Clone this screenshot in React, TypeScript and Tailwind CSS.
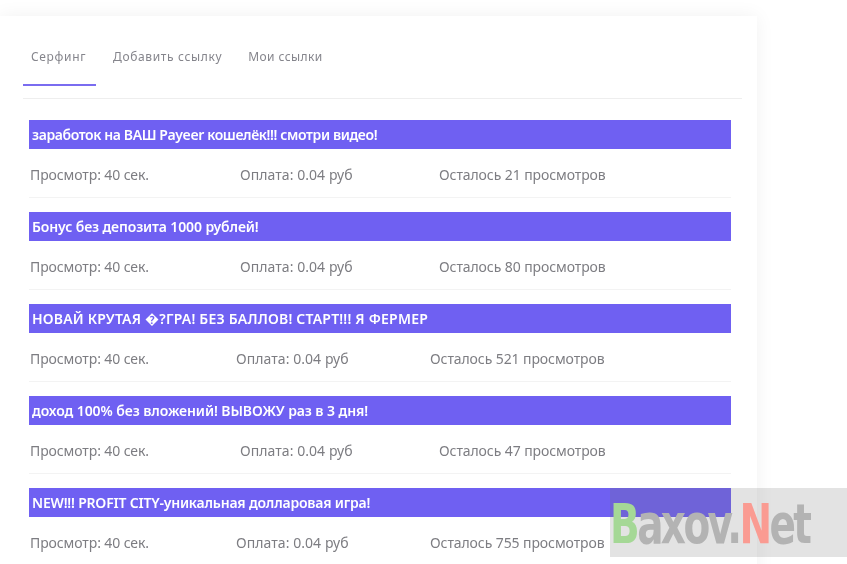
const rows = [
  { title: "заработок на ВАШ Payeer кошелёк!!! смотри видео!", track: "tracking-[-0.39px]", wide: true, left: "Осталось 21 просмотров" },
  { title: "Бонус без депозита 1000 рублей!", track: "tracking-[-0.13px]", wide: true, left: "Осталось 80 просмотров" },
  { title: "НОВАЙ КРУТАЯ �?ГРА! БЕЗ БАЛЛОВ! СТАРТ!!! Я ФЕРМЕР", track: "tracking-[0.2px]", wide: false, left: "Осталось 521 просмотров" },
  { title: "доход 100% без вложений! ВЫВОЖУ раз в 3 дня!", track: "tracking-[-0.09px]", wide: true, left: "Осталось 47 просмотров" },
  { title: "NEW!!! PROFIT CITY-уникальная долларовая игра!", track: "tracking-[-0.2px]", wide: false, left: "Осталось 755 просмотров" },
];

export default function App() {
  return (
    <div className="relative w-[847px] h-[564px] overflow-hidden bg-white font-['Noto_Sans','Open_Sans',sans-serif]">
      <div className="w-[757px] h-[600px] mt-[16px] bg-white shadow-[0_0_18px_rgba(0,0,0,0.06)] pt-[24px]">
        <div className="mx-[23px] w-[719px] border-b border-[#eeeeee] flex h-[59px] text-[12px] tracking-[0.65px] text-[#85858c] blur-[0.4px]">
          <div className="w-[73px] h-[46px] border-b-2 border-[#7a6cf0] pl-[8px] pt-[8px]">Серфинг</div>
          <div className="ml-[17px] pt-[8px]">Добавить ссылку</div>
          <div className="ml-[26px] pt-[8px] tracking-[0.4px]">Мои ссылки</div>
        </div>
        <div className="pl-[29px] pt-[21px] flex flex-col">
          {rows.map((r) => (
            <div key={r.title} className="w-[702px] h-[92px]">
              <div className={`h-[29px] bg-[#6f60f2] pl-[3px] flex items-center text-white text-[14px] font-semibold whitespace-nowrap ${r.track}`}>
                <span className="blur-[0.4px]">{r.title}</span>
              </div>
              <div className="h-[49px] pt-[2px] flex items-center pl-[1px] text-[14px] text-[#7d7d82] border-b border-[#f3f3f3] whitespace-nowrap">
                <div className={`blur-[0.4px] tracking-[-0.1px] ${r.wide ? "w-[210px]" : "w-[206px]"}`}>Просмотр: 40 сек.</div>
                <div className={`blur-[0.4px] tracking-[0.06px] ${r.wide ? "w-[199px]" : "w-[194px]"}`}>Оплата: 0.04 руб</div>
                <div className="blur-[0.4px] tracking-[-0.09px]">{r.left}</div>
              </div>
            </div>
          ))}
        </div>
      </div>
      <div className="absolute left-[610px] top-[488px] w-[237px] h-[69px] bg-[#737373]/20 flex items-center font-['DejaVu_Sans',sans-serif] font-bold text-[39px] text-[#b3b3b3] tracking-[-2.6px] whitespace-nowrap">
        <span className="block origin-left scale-y-[1.4] translate-y-[3px] blur-[0.5px]">
          <span className="text-[#a5d896]">B</span>axov.<span className="text-[#fa9b92]">N</span>et
        </span>
      </div>
    </div>
  );
}
